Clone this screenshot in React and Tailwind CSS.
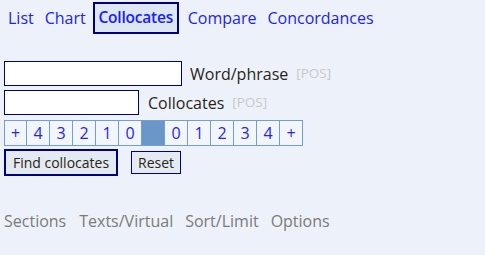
import React from "react";

const font = { fontFamily: '"Open Sans", "Noto Sans", sans-serif' };

export default function App() {
  const cells = ["+", "4", "3", "2", "1", "0", "", "0", "1", "2", "3", "4", "+"];
  return (
    <div className="w-[485px] h-[255px] bg-[#edf2fa] text-[#222]" style={font}>
      <div className="flex items-center pt-[2px] pl-[8px] text-[16px] text-[#2222ee]">
        <span className="h-[32px] flex items-center">List</span>
        <span className="h-[32px] flex items-center ml-[11px]">Chart</span>
        <span className="h-[32px] w-[86px] flex items-center justify-center ml-[7px] border-2 border-[#000080] bg-[#dde6f3] font-semibold text-[15.5px] text-[#1a1aff] tracking-[-0.2px]">
          Collocates
        </span>
        <span className="h-[32px] flex items-center ml-[9px]">Compare</span>
        <span className="h-[32px] flex items-center ml-[11px]">Concordances</span>
      </div>

      <div className="pl-[4px] pt-[27px]">
        <div className="flex items-center h-[25px]">
          <div className="w-[178px] h-[25px] bg-white border border-[#00008b]" />
          <span className="ml-[8px] text-[16px] text-[#2a2418]">Word/phrase</span>
          <span className="ml-[8px] text-[13.5px] text-[#c8c8c8]">[POS]</span>
        </div>
        <div className="flex items-center h-[25px] mt-[4px]">
          <div className="w-[135px] h-[25px] bg-white border border-[#00008b]" />
          <span className="ml-[9px] text-[16px] text-[#2a2418]">Collocates</span>
          <span className="ml-[8px] text-[13.5px] text-[#c8c8c8]">[POS]</span>
        </div>

        <div className="flex mt-[5px] h-[26px]">
          {cells.map((c, i) => (
            <div
              key={i}
              className={
                "w-[23px] h-[26px] flex items-center justify-center border-y border-r border-[#6f9fd6] text-[16px] text-[#2424f0] " +
                (i === 0 ? "border-l " : "") +
                (c === "" ? "bg-[#6b96c8]" : "bg-[#f2f6fb]")
              }
            >
              {c}
            </div>
          ))}
        </div>

        <div className="flex items-center mt-[3px] h-[27px]">
          <div className="w-[114px] h-[27px] border-2 border-[#000080] bg-[#e4eaf1] flex items-center justify-center text-[14px] text-[#2a2418]">
            Find collocates
          </div>
          <div className="ml-[13px] w-[50px] h-[23px] border border-[#00008b] bg-[#e4eaf1] flex items-center justify-center text-[14px] text-[#2a2418]">
            Reset
          </div>
        </div>
      </div>

      <div className="flex items-center pl-[4px] mt-[33px] text-[16px] text-[#7a7a7a]">
        <span>Sections</span>
        <span className="ml-[13px]">Texts/Virtual</span>
        <span className="ml-[12px]">Sort/Limit</span>
        <span className="ml-[12px]">Options</span>
      </div>
    </div>
  );
}
